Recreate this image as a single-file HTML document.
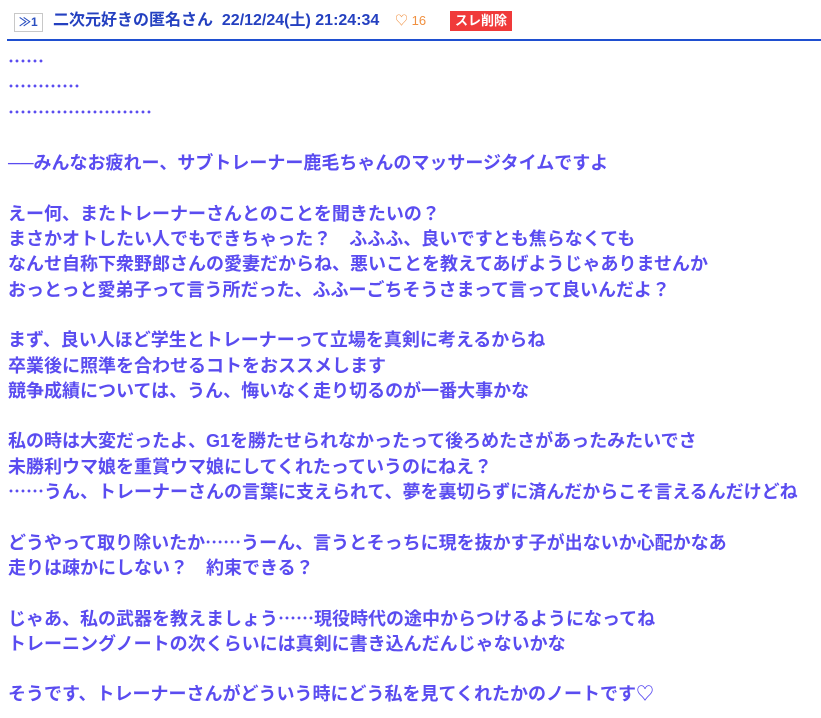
<!DOCTYPE html>
<html><head><meta charset="utf-8"><style>
body{margin:0;background:#fff;width:821px;height:718px;overflow:hidden;font-family:"Liberation Sans","Noto Sans CJK JP",sans-serif;}
.hd{position:absolute;left:7px;top:0;width:814px;height:39px;border-bottom:2px solid #1f4fd0;}
.hd span{position:absolute;top:11px;font-size:16px;font-weight:bold;line-height:20px;white-space:nowrap}
.num{left:7px;top:13px!important;border:1px solid #c8c8c8;color:#2a4fc0;font-size:12px!important;padding:0 4px;height:17px;line-height:17px!important}
.nm{left:46px;color:#2440c0}
.fav{left:388px;color:#f09040;font-weight:normal!important;font-size:13px!important}
.del{left:443px;top:11px!important;background:#f03a3a;color:#fff;padding:1px 5px;font-size:13px!important;line-height:18px!important}
.bd{position:absolute;left:8px;top:50px;color:#5a4cf0;font-weight:bold;font-size:18px;line-height:25.3px;white-space:nowrap}
.e{font-family:"Noto Sans CJK JP",sans-serif;line-height:1px;vertical-align:baseline}
</style></head><body>
<div class="hd">
<span class="num">≫1</span>
<span class="nm">二次元好きの匿名さん&nbsp; 22/12/24(土) 21:24:34</span>
<span class="fav">♡ 16</span>
<span class="del">スレ削除</span>
</div>
<div class="bd"><span class="e">……</span><br><span class="e">…………</span><br><span class="e">……………………</span><br><br>──みんなお疲れー、サブトレーナー鹿毛ちゃんのマッサージタイムですよ<br><br>えー何、またトレーナーさんとのことを聞きたいの？<br>まさかオトしたい人でもできちゃった？　ふふふ、良いですとも焦らなくても<br>なんせ自称下衆野郎さんの愛妻だからね、悪いことを教えてあげようじゃありませんか<br>おっとっと愛弟子って言う所だった、ふふーごちそうさまって言って良いんだよ？<br><br>まず、良い人ほど学生とトレーナーって立場を真剣に考えるからね<br>卒業後に照準を合わせるコトをおススメします<br>競争成績については、うん、悔いなく走り切るのが一番大事かな<br><br>私の時は大変だったよ、G1を勝たせられなかったって後ろめたさがあったみたいでさ<br>未勝利ウマ娘を重賞ウマ娘にしてくれたっていうのにねえ？<br><span class="e">……</span>うん、トレーナーさんの言葉に支えられて、夢を裏切らずに済んだからこそ言えるんだけどね<br><br>どうやって取り除いたか<span class="e">……</span>うーん、言うとそっちに現を抜かす子が出ないか心配かなあ<br>走りは疎かにしない？　約束できる？<br><br>じゃあ、私の武器を教えましょう<span class="e">……</span>現役時代の途中からつけるようになってね<br>トレーニングノートの次くらいには真剣に書き込んだんじゃないかな<br><br>そうです、トレーナーさんがどういう時にどう私を見てくれたかのノートです♡</div>
</body></html>
